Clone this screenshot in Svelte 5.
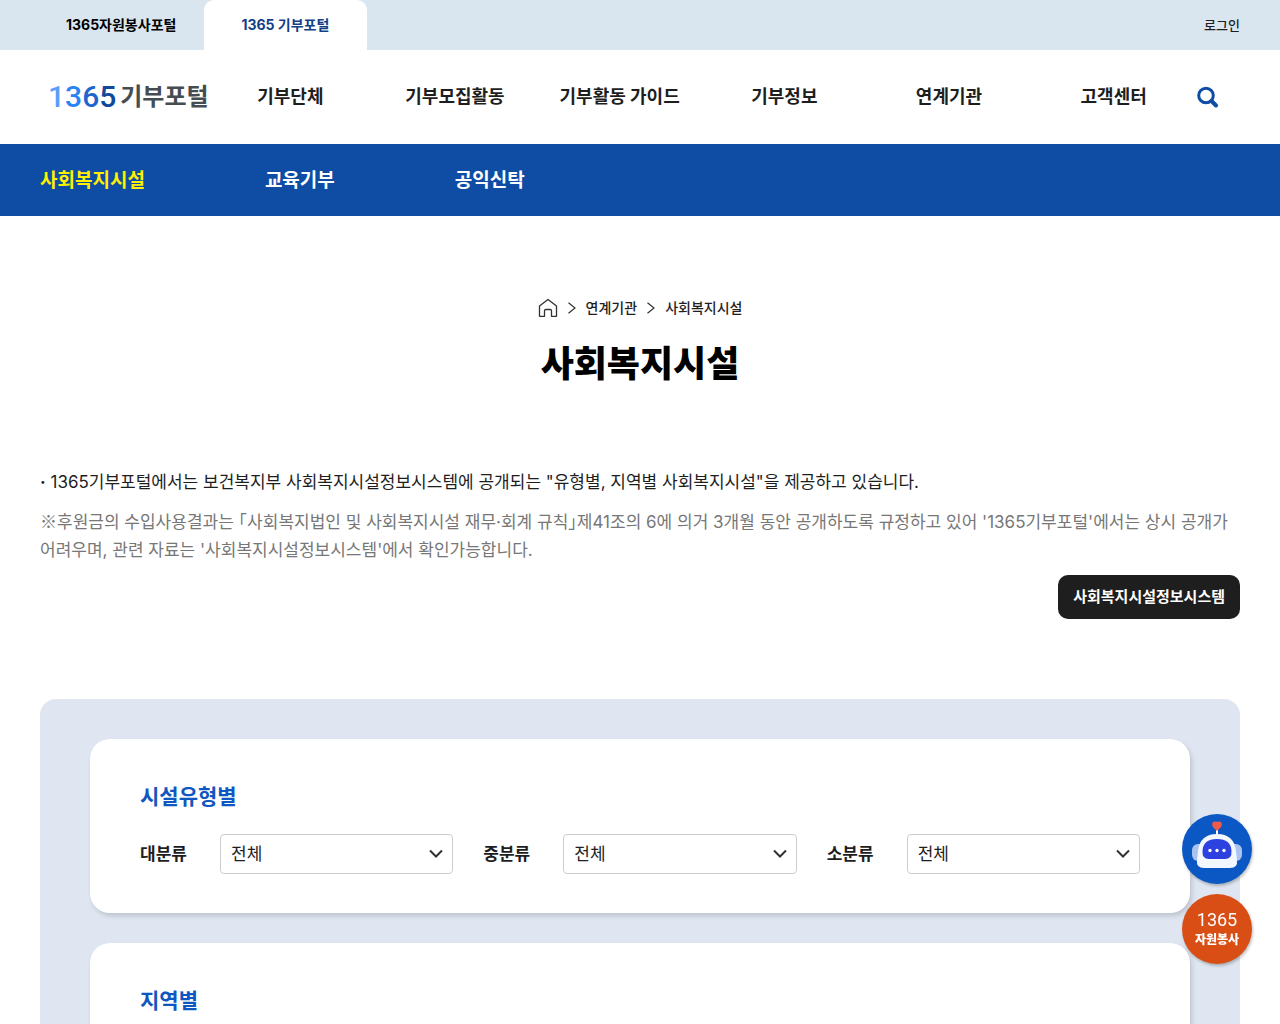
<script>
	let menus = ['기부단체', '기부모집활동', '기부활동 가이드', '기부정보', '연계기관', '고객센터'];
	let subMenus = ['사회복지시설', '교육기부', '공익신탁'];
	let current = $state('사회복지시설');

	let filters = $state([
		{ id: 'large', label: '대분류', value: '전체' },
		{ id: 'middle', label: '중분류', value: '전체' },
		{ id: 'small', label: '소분류', value: '전체' }
	]);
</script>

<div class="page">
	<div class="topbar">
		<div class="sites">
			<a href="#volunteer">1365자원봉사포털</a>
			<a href="#donation" class="on">1365 기부포털</a>
		</div>
		<a href="#login" class="login">로그인</a>
	</div>

	<header>
		<a href="#home" class="logo">
			<span class="num"><span class="n1">1</span><span class="n3">3</span><span class="n6">6</span><span class="n5">5</span></span>
			<span class="name">기부포털</span>
		</a>
		<nav class="menu">
			{#each menus as menu}
				<a href="#menu">{menu}</a>
			{/each}
		</nav>
		<button class="search" aria-label="검색">
			<svg width="24" height="24" viewBox="0 0 24 24" fill="none" stroke="#0f4da5">
				<circle cx="10" cy="10.500" r="7.300" stroke-width="3" />
				<path d="M15.500 16l4.500 4.500" stroke-width="4" stroke-linecap="round" />
			</svg>
		</button>
	</header>

	<nav class="submenu">
		{#each subMenus as sub}
			<a href="#sub" class:active={current == sub} onclick={() => (current = sub)}>{sub}</a>
		{/each}
	</nav>

	<main>
		<div class="crumbs">
			<a href="#home" aria-label="홈">
				<svg width="20" height="20" viewBox="0 0 20 20" fill="none" stroke="#333" stroke-width="1.3" stroke-linejoin="round">
					<path d="M1.500 8L10 1.500L18.500 8V18.300H13.500V12.800Q13.500 11.500 12.200 11.500H7.800Q6.500 11.500 6.500 12.800V18.300H1.500Z" />
				</svg>
			</a>
			{@render arrow()}
			<a href="#link">연계기관</a>
			{@render arrow()}
			<a href="#welfare">사회복지시설</a>
		</div>
		<h1>사회복지시설</h1>

		<p class="intro"><b>·</b> 1365기부포털에서는 보건복지부 사회복지시설정보시스템에 공개되는 "유형별, 지역별 사회복지시설"을 제공하고 있습니다.</p>
		<p class="note"><span class="mark">※</span>후원금의 수입사용결과는 「사회복지법인 및 사회복지시설 재무·회계 규칙」제41조의 6에 의거 3개월 동안 공개하도록 규정하고 있어 '1365기부포털'에서는 상시 공개가 어려우며, 관련 자료는 '사회복지시설정보시스템'에서 확인가능합니다.</p>
		<div class="right">
			<button class="system">사회복지시설정보시스템</button>
		</div>

		<div class="panel">
			<section class="card">
				<h2>시설유형별</h2>
				<div class="filters">
					{#each filters as filter}
						<div class="filter">
							<label for={filter.id}>{filter.label}</label>
							<div class="select">
								<select id={filter.id} bind:value={filter.value}>
									<option>전체</option>
								</select>
								<svg width="14" height="10" viewBox="0 0 14 10" fill="none" stroke="#333" stroke-width="2">
									<path d="M1 1.500L7 7.500L13 1.500" />
								</svg>
							</div>
						</div>
					{/each}
				</div>
			</section>
			<section class="card">
				<h2>지역별</h2>
			</section>
		</div>
	</main>

	<div class="quick">
		<button class="bot" aria-label="챗봇">
			<svg width="70" height="70" viewBox="0 0 70 70">
				<rect x="10" y="30" width="14" height="17" rx="6" fill="#a9c4ee" />
				<rect x="46" y="30" width="14" height="17" rx="6" fill="#a9c4ee" />
				<path d="M35 13V23" stroke="#fff" stroke-width="2" />
				<path d="M35 16L31.500 12.500Q30 9.500 32 8.500Q34 8 35 9Q36 8 38 8.500Q40 9.500 38.500 12.500Z" fill="#f15a4a" stroke="#f15a4a" stroke-width="1.5" />
				<path d="M16 37Q18 20 35 20Q52 20 54 37L55 46Q56 54 48 54H22Q14 54 15 46Z" fill="#f3f7ff" />
				<path d="M20.500 37Q21 25 35 25Q49 25 49.500 37Q50 45 43 45H27Q20 45 20.500 37Z" fill="#2d40e0" />
				<circle cx="28" cy="36.500" r="1.700" fill="#fff" />
				<circle cx="35" cy="36.500" r="1.700" fill="#fff" />
				<circle cx="42" cy="36.500" r="1.700" fill="#fff" />
			</svg>
		</button>
		<a href="#volunteer" class="vol">
			<span class="vol-num">1365</span>
			<span>자원봉사</span>
		</a>
	</div>
</div>

{#snippet arrow()}
	<svg width="8" height="12" viewBox="0 0 8 12" fill="none" stroke="#333" stroke-width="1.2">
		<path d="M0.500 0.800L7 6L0.500 11.200" />
	</svg>
{/snippet}

<style>
	:global(body) {
		margin: 0;
	}
	* {
		box-sizing: border-box;
		font-family: Inter, "Noto Sans CJK KR", sans-serif;
	}
	a {
		color: inherit;
		text-decoration: none;
	}
	button {
		border: 0;
		cursor: pointer;
	}
	.page {
		height: 100vh;
		overflow-y: auto;
		scrollbar-width: none;
		background: #fff;
		color: #1e1e1e;
	}

	.topbar {
		display: flex;
		justify-content: space-between;
		height: 50px;
		padding: 0 40px 0 66px;
		background: #d9e6f0;
		line-height: 50px;
	}
	.sites {
		display: flex;
		gap: 28px;
		font-size: 14px;
		font-weight: 700;
		color: #000;
	}
	.sites a.on {
		padding: 0 38px 0 37px;
		background: #fff;
		color: #123f88;
		border-radius: 10px 10px 0 0;
	}
	.login {
		font-size: 13px;
		font-weight: 500;
	}

	header {
		display: flex;
		align-items: center;
		height: 94px;
		padding: 0 20px 0 40px;
	}
	.logo {
		display: flex;
		align-items: center;
		gap: 4px;
		width: 168px;
		padding-left: 8px;
		white-space: nowrap;
	}
	.num {
		font-family: Roboto, sans-serif;
		font-size: 30px;
		font-weight: 500;
		line-height: 36px;
	}
	.num span {
		font-family: inherit;
	}
	.n1 {
		color: #5b9dfb;
	}
	.n3 {
		color: #2983f5;
	}
	.n6 {
		color: #1f64cf;
	}
	.n5 {
		color: #12499b;
	}
	.name {
		font-size: 24px;
		font-weight: 700;
		line-height: 36px;
		color: #454d52;
	}
	.menu {
		flex: 1;
		display: grid;
		grid-template-columns: repeat(6, 1fr);
		text-align: center;
		font-size: 18px;
		font-weight: 700;
		line-height: 28px;
	}
	.search {
		display: flex;
		justify-content: flex-start;
		width: 64px;
		padding: 0;
		background: none;
	}

	.submenu {
		display: flex;
		gap: 120px;
		padding: 23px 40px 21px;
		background: #0f4da5;
		color: #fff;
		font-size: 19px;
		font-weight: 700;
		line-height: 28px;
	}
	.submenu .active {
		color: #fff000;
	}

	main {
		padding: 80px 40px 60px;
	}
	.crumbs {
		display: flex;
		justify-content: center;
		align-items: center;
		gap: 10px;
		font-size: 14px;
		font-weight: 500;
		line-height: 24px;
	}
	.crumbs a {
		display: flex;
	}
	h1 {
		margin: 16px 0 76px;
		text-align: center;
		font-size: 36px;
		font-weight: 900;
		line-height: 56px;
		color: #000;
	}
	p {
		margin: 0;
		font-size: 17px;
		line-height: 28px;
		word-break: keep-all;
	}
	.note {
		margin: 12px 0 11px;
		color: #777;
		font-feature-settings: "halt";
	}
	.mark {
		font-family: "Noto Sans CJK KR", sans-serif;
		line-height: 1;
	}
	.right {
		display: flex;
		justify-content: flex-end;
	}
	.system {
		padding: 0 15px;
		border-radius: 10px;
		background: #1e1e1e;
		color: #fff;
		font-size: 15px;
		font-weight: 700;
		line-height: 44px;
	}

	.panel {
		display: flex;
		flex-direction: column;
		gap: 30px;
		margin-top: 80px;
		padding: 40px 50px;
		border-radius: 16px;
		background: #dfe6f1;
	}
	.card {
		padding: 43px 50px 39px;
		border-radius: 20px;
		background: #fff;
		box-shadow: 2px 3px 5px rgba(0, 0, 0, 0.15);
	}
	h2 {
		margin: 0;
		font-size: 21px;
		font-weight: 700;
		line-height: 30px;
		color: #0f57c0;
	}
	.filters {
		display: grid;
		grid-template-columns: repeat(3, 1fr);
		gap: 30px;
		margin-top: 22px;
	}
	.filter {
		display: flex;
		align-items: center;
	}
	label {
		width: 80px;
		font-size: 17px;
		font-weight: 700;
		line-height: 40px;
	}
	.select {
		flex: 1;
		display: grid;
		align-items: center;
	}
	.select > * {
		grid-area: 1 / 1;
	}
	select {
		appearance: none;
		width: 100%;
		height: 40px;
		padding: 0 10px;
		border: 1px solid #ccc;
		border-radius: 4px;
		background: #fff;
		color: #1e1e1e;
		font-size: 17px;
	}
	.select svg {
		justify-self: end;
		margin-right: 10px;
		pointer-events: none;
	}

	.quick {
		position: fixed;
		right: 28px;
		bottom: 60px;
		display: flex;
		flex-direction: column;
		gap: 10px;
	}
	.quick > * {
		width: 70px;
		height: 70px;
		padding: 0;
		border-radius: 50%;
		box-shadow: 1px 2px 3px rgba(0, 0, 0, 0.25);
	}
	.bot {
		background: #0b57c4;
	}
	.vol {
		display: flex;
		flex-direction: column;
		align-items: center;
		justify-content: center;
		background: #d94e14;
		color: #fff;
		font-size: 12px;
		font-weight: 900;
		line-height: 18px;
	}
	.vol-num {
		font-family: Roboto, sans-serif;
		font-size: 18px;
		font-weight: 400;
		line-height: 22px;
	}
</style>
